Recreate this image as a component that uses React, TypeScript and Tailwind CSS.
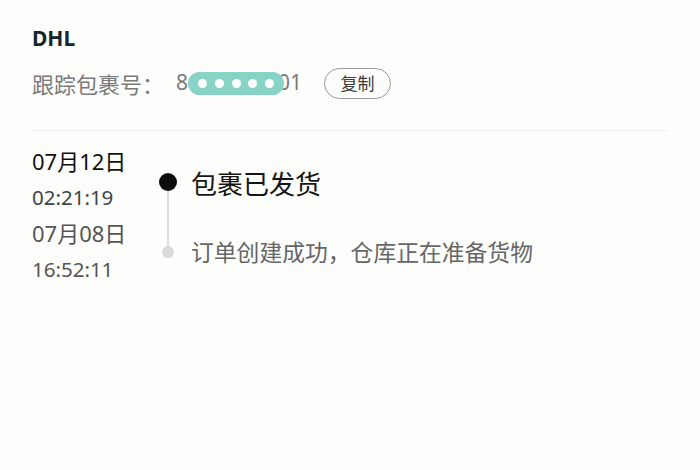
const cjk = { fontFamily: '"Noto Sans CJK SC", "Noto Sans", sans-serif' };

function Redacted() {
  return (
    <span className="relative z-10 inline-flex h-[23px] w-[96px] items-center justify-around rounded-full bg-[#87d4c7] px-[6px]">
      {[0, 1, 2, 3, 4].map(i => (
        <span key={i} className="h-[9px] w-[9px] rounded-full bg-white" />
      ))}
    </span>
  );
}

export default function App() {
  return (
    <div className="h-[470px] w-[700px] bg-[#fdfdfc] px-[32px] pt-[24px]" style={cjk}>
      <div className="text-[21px] font-bold leading-[28px] text-[#17262e]" style={{ fontFamily: '"Noto Sans", sans-serif' }}>
        DHL
      </div>
      <div className="mt-[15px] flex h-[32px] items-center text-[22px] text-[#7a7a7a]">
        <span>跟踪包裹号：</span>
        <span className="ml-[12px] flex items-center text-[21px]" style={{ fontFamily: '"Noto Sans", sans-serif' }}>
          <span>8</span>
          <Redacted />
          <span className="-ml-[6px]">01</span>
        </span>
        <button className="ml-[22px] flex h-[31px] w-[67px] items-center justify-center rounded-full border border-[#9a9a9a] text-[17px] text-[#3a3a3a]">
          复制
        </button>
      </div>
      <div className="mt-[31px] h-px bg-[#efefef]" />
      <div className="mt-[17px] flex">
        <div className="flex w-[127px] flex-col" style={{ fontFamily: '"Noto Sans", "Noto Sans CJK SC", sans-serif' }}>
          <span className="h-[36px] text-[22px] leading-[26px] text-[#111]">07月12日</span>
          <span className="h-[36px] text-[20.5px] leading-[26px] text-[#3c4448]">02:21:19</span>
          <span className="h-[36px] text-[22px] leading-[26px] text-[#555]">07月08日</span>
          <span className="h-[36px] text-[20.5px] leading-[26px] text-[#555]">16:52:11</span>
        </div>
        <div className="flex pt-[25px]">
          <div className="flex w-[18px] flex-col items-center">
            <span className="h-[18px] w-[18px] rounded-full bg-[#0d0d0d]" />
            <span className="h-[55px] w-[2px] bg-[#dcdcdc]" />
            <span className="h-[12px] w-[12px] rounded-full bg-[#dadada]" />
          </div>
          <div className="ml-[14px] flex flex-col">
            <span className="text-[26px] leading-[20px] text-[#151515]">包裹已发货</span>
            <span className="mt-[47px] text-[22.8px] leading-[24px] text-[#666]">订单创建成功，仓库正在准备货物</span>
          </div>
        </div>
      </div>
    </div>
  );
}
